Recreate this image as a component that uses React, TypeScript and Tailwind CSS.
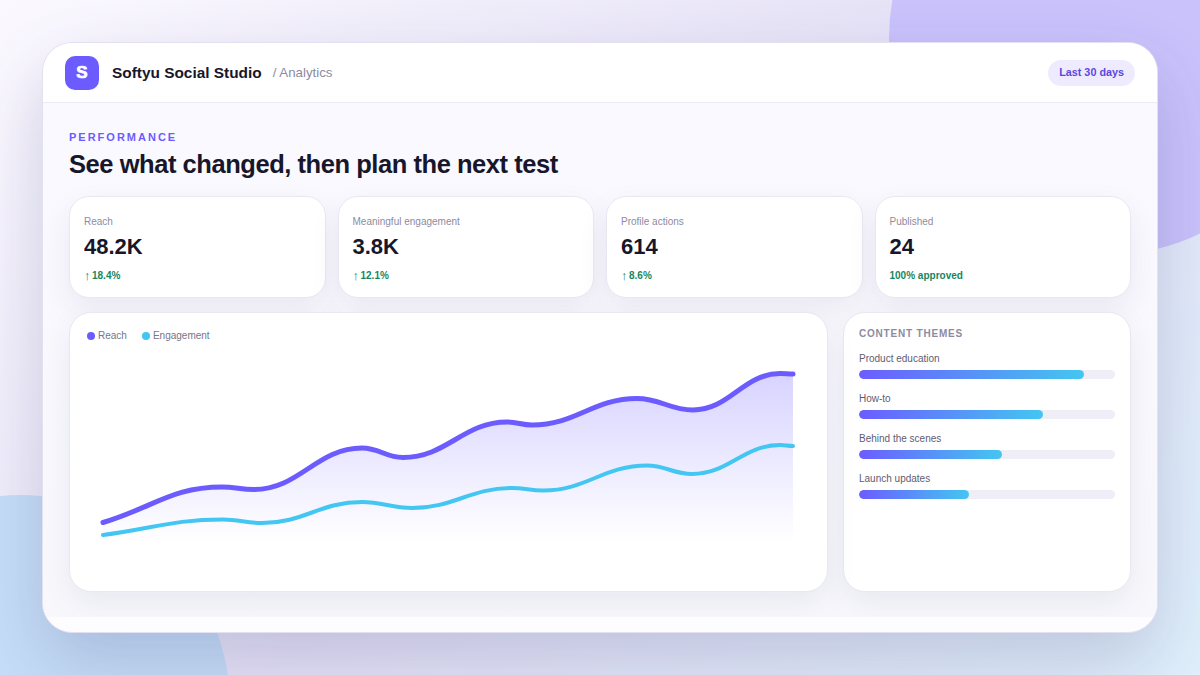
const font = "[font-family:'Liberation_Sans',Arial,sans-serif]";

function smooth(p: number[][]) {
  const slope = (i: number) => {
    if (i === 0) return (p[1][1] - p[0][1]) / (p[1][0] - p[0][0]);
    return 0;
  };
  let d = `M${p[0][0]} ${p[0][1]}`;
  for (let i = 0; i < p.length - 1; i++) {
    const b = p[i], c = p[i + 1], dx = (c[0] - b[0]) * 0.42;
    d += ` C${(b[0] + dx).toFixed(1)} ${(b[1] + slope(i) * dx).toFixed(1)} ${(c[0] - dx).toFixed(1)} ${c[1]} ${c[0]} ${c[1]}`;
  }
  return d;
}

const reach = [[103,522.5],[222,487],[254,489.5],[362,448],[403,457.5],[507,422],[532,425],[637,398.5],[693,410],[780,373.5],[793,374]];
const engagement = [[103,535],[223,519.5],[262,523],[362,502],[412,508],[512,488],[543,490.5],[647,465.5],[692,474],[780,445],[793,446]];

const stats = [
  { label: "Reach", value: "48.2K", delta: "18.4%" },
  { label: "Meaningful engagement", value: "3.8K", delta: "12.1%" },
  { label: "Profile actions", value: "614", delta: "8.6%" },
  { label: "Published", value: "24", note: "100% approved" },
];

const themes = [
  { name: "Product education", pct: 88 },
  { name: "How-to", pct: 72 },
  { name: "Behind the scenes", pct: 56 },
  { name: "Launch updates", pct: 43 },
];

export default function App() {
  const r = smooth(reach);
  return (
    <div className={`relative w-[1200px] h-[675px] overflow-hidden bg-[linear-gradient(135deg,#fbf9ff_0%,#e6e2f7_50%,#dff0fc_100%)] ${font}`}>
      <div className="absolute left-[889px] top-[-179px] w-[434px] h-[434px] rounded-full bg-[#c9c2fb]" />
      <div className="absolute left-[-190px] top-[495px] w-[420px] h-[420px] rounded-full bg-[#c6def8]" />
      <div className="relative mx-auto mt-[42px] w-[1116px] h-[591px] flex flex-col rounded-[30px] border border-[#e3e1ef] bg-[#fdfcff] shadow-[0_30px_70px_rgba(50,50,110,0.2)] overflow-hidden">
        <header className="h-[60px] shrink-0 flex items-center justify-between px-[22px] bg-white border-b border-[#ecebf4]">
          <div className="flex items-center">
            <div className="w-[34px] h-[34px] rounded-[10px] bg-[#6c5cff] flex items-center justify-center text-white text-[17px] font-bold [-webkit-text-stroke:0.7px_white]">S</div>
            <span className="ml-[13px] text-[15.4px] font-bold text-[#17162a]">Softyu Social Studio</span>
            <span className="ml-[11px] text-[13.3px] text-[#8e8b9f]">/ Analytics</span>
          </div>
          <div className="h-[26px] px-[11px] rounded-full bg-[#eeebff] flex items-center text-[10.8px] font-bold text-[#5a48e0]">Last 30 days</div>
        </header>
        <main className="shrink-0 h-[514px] overflow-hidden bg-[linear-gradient(180deg,#faf9ff,#f8f8fc)] px-[26px] pt-[27px]">
          <div className="text-[11px] leading-[14px] font-bold tracking-[2px] text-[#6c5cff]">PERFORMANCE</div>
          <h1 className="mt-[3px] text-[25.5px] leading-[34px] font-bold tracking-[-0.45px] text-[#17162a]">See what changed, then plan the next test</h1>
          <div className="mt-[15px] grid grid-cols-4 gap-[12px]">
            {stats.map((s) => (
              <div key={s.label} className="h-[102px] rounded-[20px] border border-[#e9e8f2] bg-white px-[14px] pt-[19px] shadow-[0_12px_30px_rgba(50,50,110,0.08)]">
                <div className="text-[10px] leading-[12px] text-[#8e8b9f]">{s.label}</div>
                <div className="mt-[6px] text-[22px] leading-[26px] font-bold text-[#17162a]">{s.value}</div>
                <div className="mt-[10px] h-[12px] flex items-center text-[10px] leading-[12px] font-bold text-[#15875f]">
                  {s.delta ? <><span className="mr-[1.5px] text-[13px] font-normal">↑</span>{s.delta}</> : s.note}
                </div>
              </div>
            ))}
          </div>
          <div className="mt-[14px] flex gap-[15px]">
            <div className="relative w-[759px] h-[280px] rounded-[22px] border border-[#e9e8f2] bg-white shadow-[0_12px_30px_rgba(50,50,110,0.08)]">
              <div className="flex items-center pl-[17px] pt-[17px] text-[10px] leading-[12px] text-[#77748a]">
                <span className="w-2 h-2 rounded-full bg-[#6c5cff]" />
                <span className="ml-[3px]">Reach</span>
                <span className="ml-[15px] w-2 h-2 rounded-full bg-[#43c6f1]" />
                <span className="ml-[3px]">Engagement</span>
              </div>
              <svg className="absolute left-[-70px] top-[-313px] pointer-events-none" width="900" height="640" viewBox="0 0 900 640" fill="none">
                <defs>
                  <linearGradient id="area" x1="0" y1="373" x2="0" y2="542" gradientUnits="userSpaceOnUse">
                    <stop offset="0" stopColor="#6c5cff" stopOpacity="0.27" />
                    <stop offset="1" stopColor="#6c5cff" stopOpacity="0" />
                  </linearGradient>
                </defs>
                <path d={`${r} L793 542 L103 542 Z`} fill="url(#area)" />
                <path d={r} stroke="#6c5cff" strokeWidth="5" strokeLinecap="round" />
                <path d={smooth(engagement)} stroke="#43c6f1" strokeWidth="4" strokeLinecap="round" />
              </svg>
            </div>
            <div className="w-[288px] h-[280px] rounded-[22px] border border-[#e9e8f2] bg-white px-[15px] pt-[15px] shadow-[0_12px_30px_rgba(50,50,110,0.08)]">
              <div className="text-[10px] leading-[12px] font-bold tracking-[0.8px] text-[#8e8b9f]">CONTENT THEMES</div>
              <div className="mt-[8px] flex flex-col gap-[9px]">
                {themes.map((t) => (
                  <div key={t.name}>
                    <div className="h-[20px] mb-[2px] flex items-center text-[10px] text-[#5f5c72]">{t.name}</div>
                    <div className="h-[9px] rounded-full bg-[#efeef7] overflow-hidden">
                      <div className="h-full rounded-full bg-[linear-gradient(90deg,#6c5cff,#43c6f1)]" style={{ width: `${t.pct}%` }} />
                    </div>
                  </div>
                ))}
              </div>
            </div>
          </div>
        </main>
      </div>
    </div>
  );
}
